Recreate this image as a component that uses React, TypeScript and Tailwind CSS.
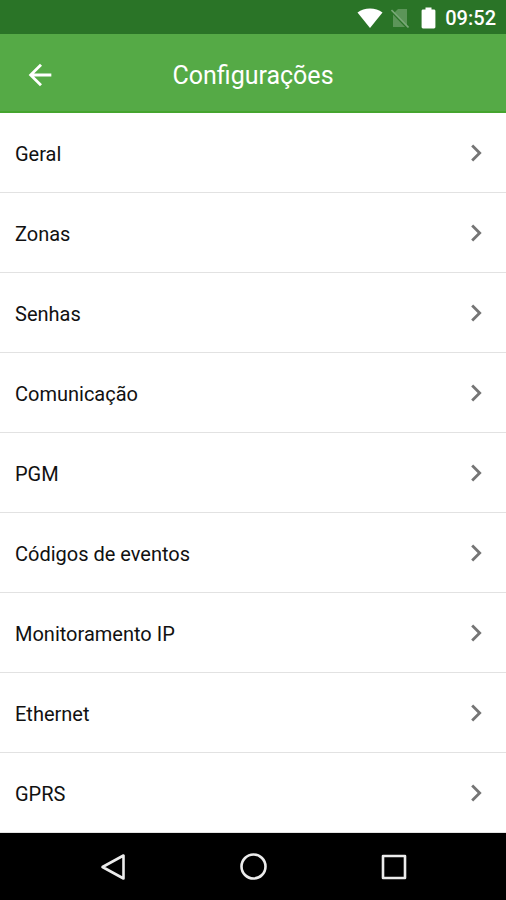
import React from 'react';
import { MdArrowBack, MdChevronRight } from 'react-icons/md';

const items = [
  'Geral',
  'Zonas',
  'Senhas',
  'Comunicação',
  'PGM',
  'Códigos de eventos',
  'Monitoramento IP',
  'Ethernet',
  'GPRS',
];

const StatusBar: React.FC = () => (
  <div className="flex h-[34px] items-center justify-end bg-[#2a7427] pt-0.5 pr-[10px] text-white">
    <svg className="mr-2 h-5 w-[26px]" viewBox="0 0 26 20" fill="currentColor" aria-hidden="true">
      <path d="M13 20 0.5 4.6C4 1.8 8.3 0.4 13 0.4s9 1.4 12.5 4.2L13 20Z" />
    </svg>
    <svg className="mr-3 h-5 w-[18px]" viewBox="0 0 18 20" aria-hidden="true">
      <path d="M7 1h9v18H2V6l5-5Z" fill="#5c9559" />
      <path d="M0 3.4 16 19.9" stroke="#2a7427" strokeWidth="1.6" />
      <path d="M0.5 2 17.5 19.500" stroke="#79a877" strokeWidth="1.6" />
    </svg>
    <svg className="mr-[9px] h-[22px] w-[15px]" viewBox="0 0 15 22" fill="currentColor" aria-hidden="true">
      <path d="M4.5 0.5h6v2H13c.8 0 1.4.6 1.4 1.4v16.2c0 .8-.6 1.4-1.4 1.4H2c-.8 0-1.4-.6-1.4-1.4V3.9C.6 3.1 1.2 2.5 2 2.500h2.500v-2Z" />
    </svg>
    <span className="text-[20px] leading-6 font-medium">09:52</span>
  </div>
);

const Header: React.FC = () => (
  <header className="grid h-[79px] grid-cols-[1fr_auto_1fr] items-center border-b-2 border-[#45a52f] bg-[#55aa46] px-[23px] pt-1 text-white">
    <button type="button" aria-label="Voltar" className="justify-self-start">
      <MdArrowBack size={34} />
    </button>
    <h1 className="pt-0.5 text-[25px] leading-8">Configurações</h1>
  </header>
);

const NavBar: React.FC = () => (
  <nav className="flex h-[67px] items-center justify-center gap-[108px] bg-black text-[#ececec]">
    <button type="button" aria-label="Retornar">
      <svg className="size-8" viewBox="0 0 32 32" fill="none" stroke="currentColor" strokeWidth="2.6" strokeLinejoin="round">
        <path d="M26.500 4.500V27.500L5.500 16Z" />
      </svg>
    </button>
    <button type="button" aria-label="Início">
      <svg className="size-8" viewBox="0 0 32 32" fill="none" stroke="currentColor" strokeWidth="2.6">
        <circle cx="16.500" cy="15.500" r="12" />
      </svg>
    </button>
    <button type="button" aria-label="Recentes">
      <svg className="size-8" viewBox="0 0 32 32" fill="none" stroke="currentColor" strokeWidth="2.6" strokeLinejoin="round">
        <rect x="6" y="5" width="22" height="22" />
      </svg>
    </button>
  </nav>
);

const App: React.FC = () => {
  return (
    <div className="flex min-h-screen flex-col bg-white font-[Roboto,sans-serif]">
      <StatusBar />
      <Header />
      <main className="flex-1">
        <ul>
          {items.map((item) => (
            <li key={item} className="border-b border-[#e2e2e2]">
              <a href="#" className="flex h-[79px] items-center justify-between pr-[13px] pl-[15px]">
                <span className="pt-0.5 text-[20px] leading-6 text-[#111111]">{item}</span>
                <MdChevronRight size={34} className="text-[#757575]" />
              </a>
            </li>
          ))}
        </ul>
      </main>
      <NavBar />
    </div>
  );
};

export default App;
